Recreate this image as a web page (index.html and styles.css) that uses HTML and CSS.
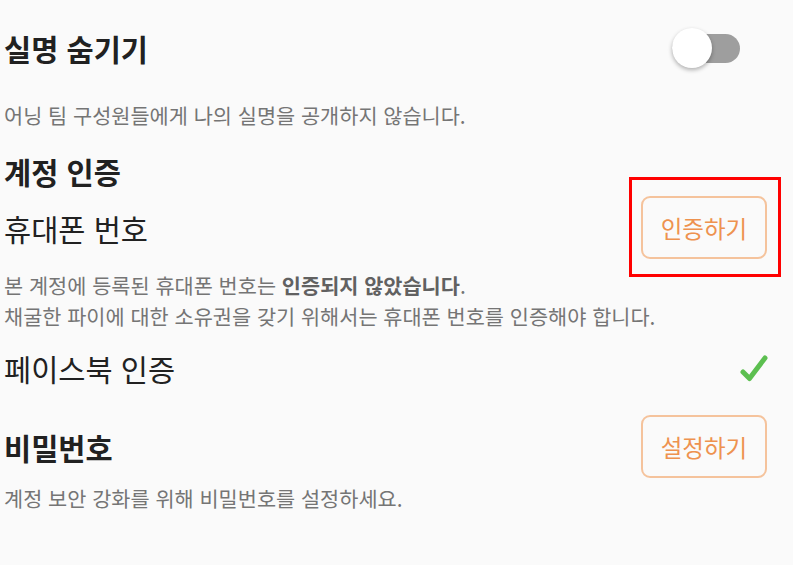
FILE: index.html
```html
<!DOCTYPE html>
<html lang="ko">
<head>
    <meta charset="UTF-8">
    <meta name="viewport" content="width=device-width, initial-scale=1.0">
    <title>계정 설정</title>
    <link rel="stylesheet" href="styles.css">
</head>
<body>

<div class="settings">
    <div class="row row-name">
        <h2 class="title bold">실명 숨기기</h2>
        <div class="toggle">
            <span class="toggle-track"></span>
            <span class="toggle-knob"></span>
        </div>
    </div>
    <p class="desc desc-name">어닝 팀 구성원들에게 나의 실명을 공개하지 않습니다.</p>

    <h2 class="title bold section">계정 인증</h2>

    <div class="row row-phone">
        <h3 class="title">휴대폰 번호</h3>
        <div class="highlight">
            <button class="btn">인증하기</button>
            <span class="highlight-frame"></span>
        </div>
    </div>
    <p class="desc desc-phone">본 계정에 등록된 휴대폰 번호는 <strong>인증되지 않았습니다</strong>.<br>채굴한 파이에 대한 소유권을 갖기 위해서는 휴대폰 번호를 인증해야 합니다.</p>

    <div class="row row-facebook">
        <h3 class="title">페이스북 인증</h3>
        <svg class="check" width="30" height="30" viewBox="0 0 30 30">
            <polyline points="5,19 11.5,25.5 27,5" fill="none" stroke="#5cbf50" stroke-width="5" stroke-linecap="round" stroke-linejoin="round"/>
        </svg>
    </div>

    <div class="row row-password">
        <h2 class="title bold">비밀번호</h2>
        <button class="btn">설정하기</button>
    </div>
    <p class="desc desc-password">계정 보안 강화를 위해 비밀번호를 설정하세요.</p>
</div>

</body>
</html>
```

FILE: styles.css
```css
body {
    margin: 0;
    padding: 0;
    background-color: #fafafa;
    font-family: "Noto Sans CJK KR", "Noto Sans", sans-serif;
    color: #212121;
    height: 565px;
    overflow: hidden;
}

.settings {
    padding: 0 26px 0 4px;
}

.row {
    display: flex;
    justify-content: space-between;
    align-items: center;
}

.title {
    margin: 0;
    font-size: 29.5px;
    font-weight: 400;
    line-height: 40px;
}

.bold {
    font-weight: 700;
}

.desc {
    margin: 0;
    font-size: 20.8px;
    line-height: 31px;
    color: #757575;
}

.desc strong {
    color: #616161;
    font-weight: 700;
}

.row-name {
    height: 56px;
    margin-top: 20px;
}

.desc-name {
    margin-top: 24px;
}

.section {
    margin-top: 20px;
}

.row-phone {
    margin-top: 5px;
}

.desc-phone {
    margin-top: 11px;
}

.row-facebook {
    margin-top: 16px;
}

.row-password {
    margin-top: 27px;
}

.desc-password {
    margin-top: 5px;
}

/* switch */
.toggle {
    position: relative;
    width: 68px;
    height: 40px;
    margin-right: 27px;
}

.toggle-track {
    position: absolute;
    left: 0;
    top: 6px;
    width: 68px;
    height: 29px;
    border-radius: 15px;
    background-color: #9e9e9e;
}

.toggle-knob {
    position: absolute;
    left: 0;
    top: 0;
    width: 40px;
    height: 40px;
    border-radius: 50%;
    background-color: #fff;
    box-shadow: 0 2px 4px rgba(0, 0, 0, 0.3);
}

.btn {
    width: 126px;
    height: 63px;
    border: 2px solid #f5c39c;
    border-radius: 9px;
    background-color: transparent;
    color: #ee924f;
    font-family: inherit;
    font-size: 23.5px;
    padding: 0;
}

.highlight {
    position: relative;
}

.highlight .btn {
    display: block;
}

.highlight-frame {
    position: absolute;
    left: -12px;
    right: -14px;
    top: -19px;
    bottom: -18px;
    border: 3px solid #ff0000;
}

.check {
    display: block;
    margin-right: -1px;
}
```
